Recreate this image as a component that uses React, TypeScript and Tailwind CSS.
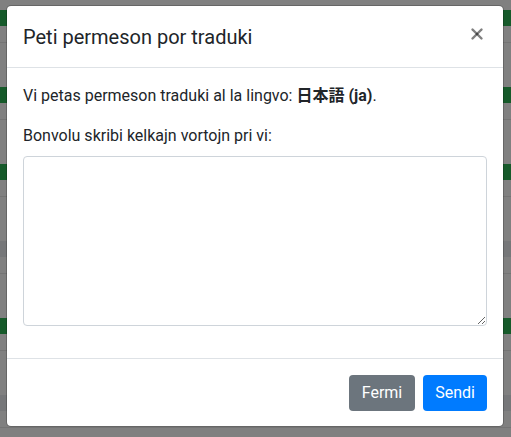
import { X } from 'lucide-react';

const rows = ['green', 'green', 'green', 'gray', 'green', 'gray'];

function Backdrop() {
  return (
    <div className="h-[437px] overflow-hidden bg-[#808080] pt-[10px]">
      {rows.map((c, i) => (
        <div key={i} className="h-[77px]">
          <div className={c === 'green' ? 'h-[16px] bg-[#165a2a]' : 'h-[16px] bg-[#767779]'} />
          <div className="mt-[16px] h-px bg-[#747474]" />
        </div>
      ))}
    </div>
  );
}

export default function App() {
  return (
    <div className="relative h-[437px] w-[511px] overflow-hidden" style={{ fontFamily: 'Roboto, "Noto Sans CJK JP", sans-serif' }}>
      <Backdrop />

      {/* modal */}
      <div className="absolute left-[6px] top-[5px] w-[498px] rounded-[5px] border border-black/20 bg-white text-[#212529] bg-clip-padding">
        <div className="flex items-start justify-between border-b border-[#dee2e6] px-4 pt-4 pb-[15px]">
          <h5 className="text-[20px] leading-[30px] font-normal">Peti permeson por traduki</h5>
          <button className="mt-[3px] mr-[1px] text-black/50">
            <X size={18} strokeWidth={3.2} />
          </button>
        </div>

        <div className="p-4 text-[16px] leading-6">
          <p className="mb-4">
            Vi petas permeson traduki al la lingvo: <b className="font-bold">日本語 (ja)</b>.
          </p>
          <div className="mb-4">
            <label className="mb-2 block">Bonvolu skribi kelkajn vortojn pri vi:</label>
            <textarea className="block h-[170px] w-full rounded-[4px] border border-[#ced4da] px-3 py-1.5 outline-none" />
          </div>
        </div>

        <div className="flex justify-end gap-2 border-t border-[#dee2e6] px-4 pt-[16px] pb-[15px]">
          <button className="rounded-[4px] bg-[#6c757d] px-[13px] py-1.5 text-[16px] leading-6 text-white">Fermi</button>
          <button className="rounded-[4px] bg-[#007bff] px-3 py-1.5 text-[16px] leading-6 text-white">Sendi</button>
        </div>
      </div>
    </div>
  );
}
